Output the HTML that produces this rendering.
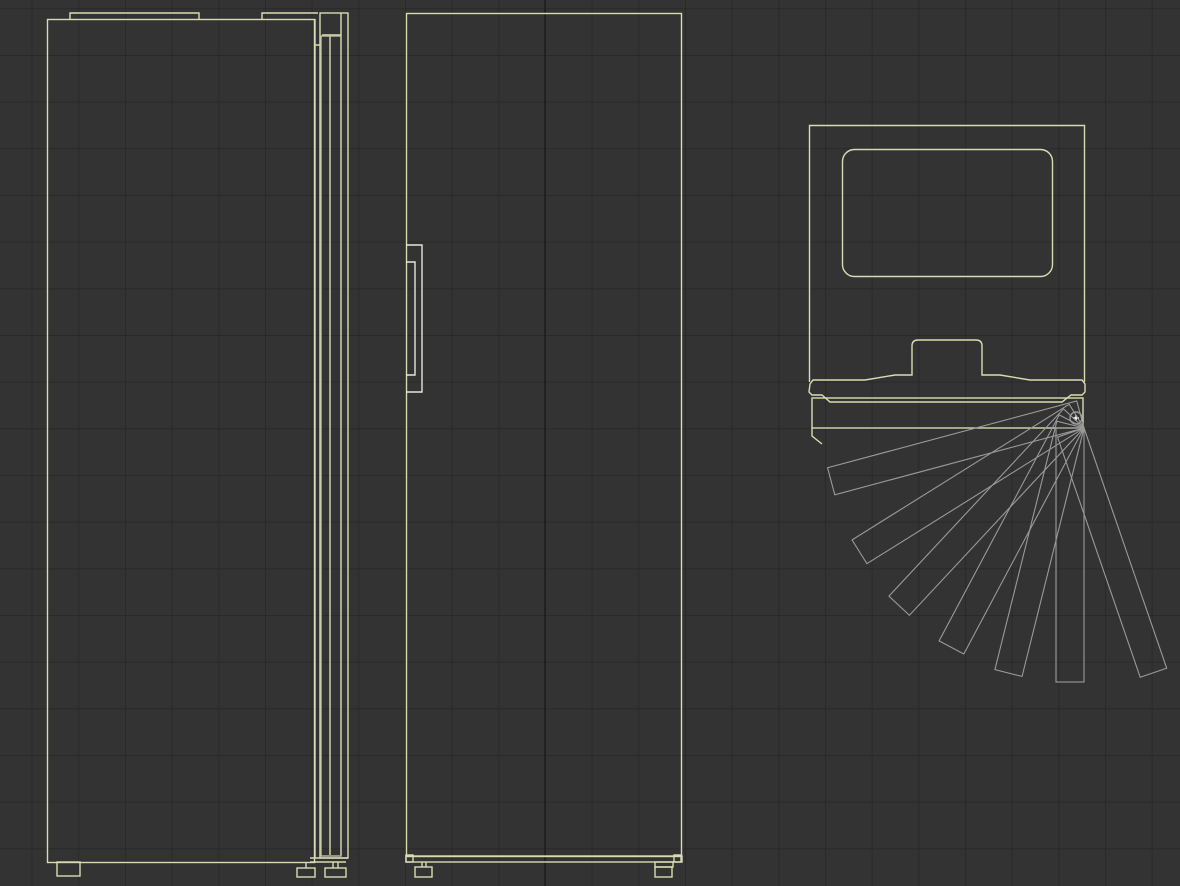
<!DOCTYPE html>
<html><head><style>html,body{margin:0;padding:0;background:#333;}svg{display:block}</style></head>
<body>
<svg width="1180" height="886" viewBox="0 0 1180 886" xmlns="http://www.w3.org/2000/svg">
<defs>
<pattern id="g" x="31.67" y="8.33" width="46.67" height="46.67" patternUnits="userSpaceOnUse">
<path d="M0 0V46.67M0 0H46.67" stroke="#262626" stroke-width="1.5" fill="none"/>
</pattern>
</defs>
<rect width="1180" height="886" fill="#333"/>
<rect width="1180" height="886" fill="url(#g)"/>
<line x1="545" y1="0" x2="545" y2="886" stroke="#1c1c1c" stroke-width="1.5"/>
<g fill="none" stroke="#d9dcb2" stroke-width="1.4">
<rect x="47.5" y="19.5" width="267" height="843"/>
<path d="M70 19.5V13H199V19.5M262 19.5V13H318"/>
<rect x="320" y="13" width="28" height="845"/>
<path d="M322 35H341M330 35V855M341 13V855M315 45H320M315 19V858"/>
<rect x="321" y="36" width="20" height="820" stroke="#bfc2a0"/>
<path d="M310 858H348M310 862H346"/>
<rect x="57" y="862" width="23" height="14"/>
<rect x="297" y="868" width="18" height="9"/><path d="M306 862V868"/>
<rect x="325" y="868" width="21" height="9"/><path d="M333 862V868M338 862V868"/>
<rect x="406.5" y="13.5" width="275" height="843"/>
<rect x="406" y="856" width="276" height="6"/>
<rect x="406" y="855" width="7" height="7"/>
<rect x="674" y="855" width="7" height="7"/>
<rect x="415" y="867" width="17" height="10"/><path d="M422 862V867M426 862V867"/>
<rect x="655" y="867" width="17" height="10"/><rect x="655" y="862" width="18" height="5"/>
<path d="M406 245H422V392H406M406 262H415V375H406" stroke="#e6e6dc"/>
<path d="M809.5 382V125.5H1084.5V382"/>
<rect x="842.5" y="149.5" width="210" height="127" rx="12"/>
<path d="M810 384L813 380H865L895 375H912V346Q912 340 918 340H976Q982 340 982 346V375H1000L1030 380H1082L1085 384V392L1082 395H1071L1062 402H830L822 395H812L809 392Z"/>
<rect x="812" y="398" width="271" height="30"/>
<path d="M812 428V436L822 444"/>
<circle cx="1076" cy="418" r="6" stroke="#999"/>
<path d="M1073 418H1079M1076 415V421" stroke="#fff"/>
</g>
<g fill="none" stroke="#9a9a9a" stroke-width="1.1">
<g transform="translate(1084,428)">
<rect x="0" y="0" width="258" height="28" transform="rotate(165)"/>
<rect x="0" y="0" width="256" height="28" transform="rotate(148)"/>
<rect x="0" y="0" width="256" height="28" transform="rotate(133)"/>
<rect x="0" y="0" width="256" height="28" transform="rotate(118)"/>
<rect x="0" y="0" width="256" height="28" transform="rotate(104)"/>
<rect x="0" y="0" width="254" height="28" transform="rotate(90)"/>
<rect x="0" y="0" width="254" height="28" transform="rotate(71)"/>
</g>
</g>
</svg>
</body></html>
